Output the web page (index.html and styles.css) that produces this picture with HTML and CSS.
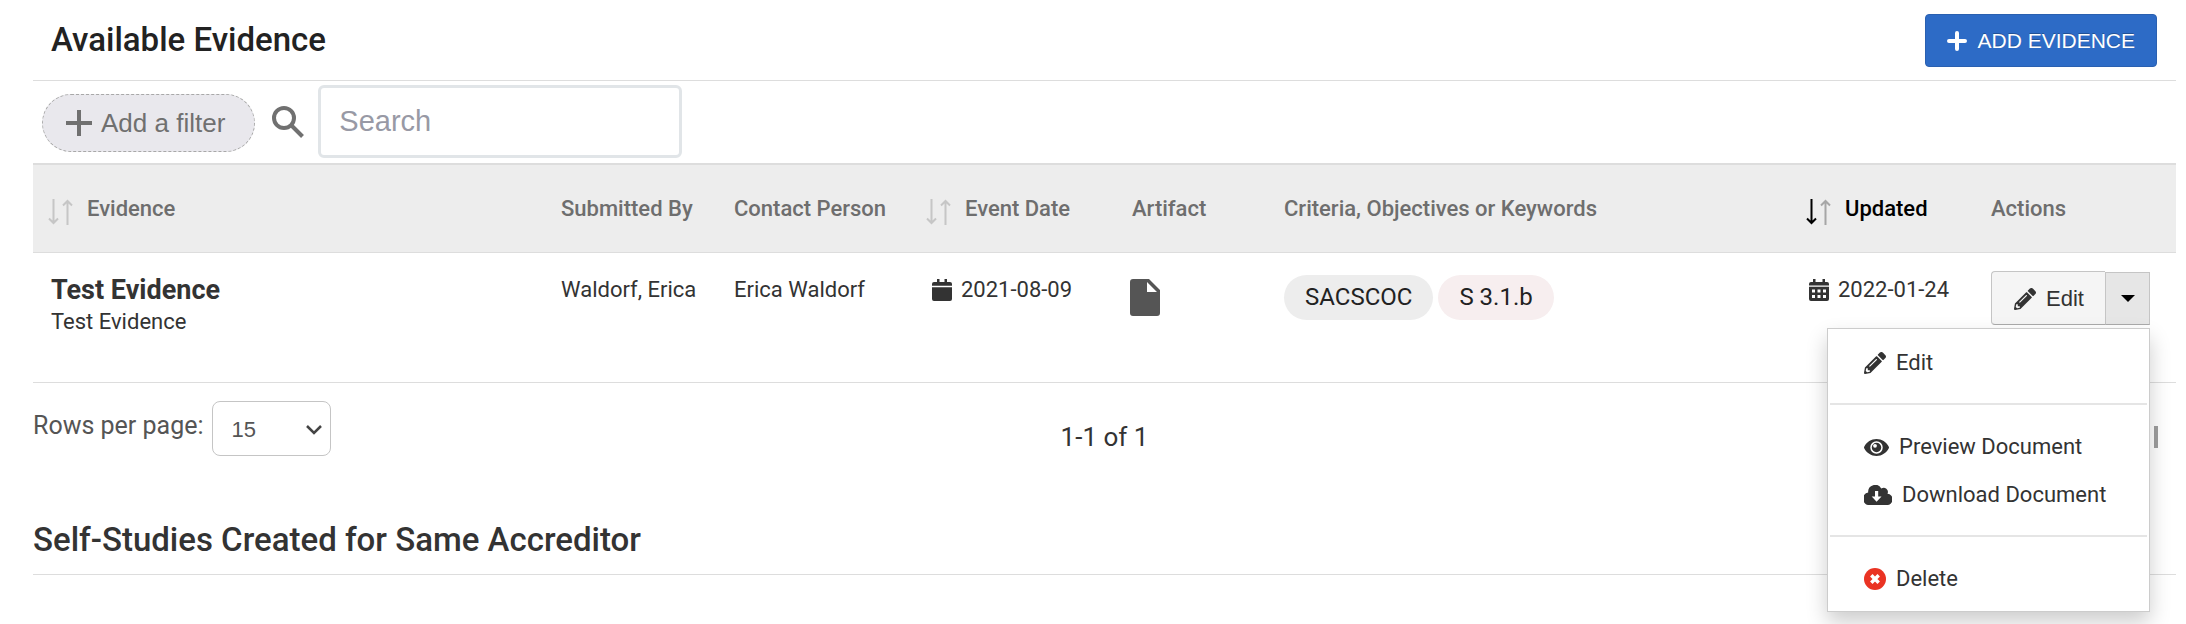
FILE: index.html
```html
<!DOCTYPE html>
<html lang="en">
<head>
<meta charset="utf-8">
<title>Available Evidence</title>
<link rel="stylesheet" href="styles.css">
</head>
<body>
<svg class="sprite" aria-hidden="true">
  <symbol id="pencil" viewBox="0 0 512 512"><path d="M498 142l-46 46c-5 5-12 5-17 0L324 77c-5-5-5-12 0-17l46-46c19-19 49-19 68 0l60 60c19 19 19 49 0 68zm-214-42L22 362 0 484c-3 16 12 30 28 28l122-22 262-262c5-5 5-12 0-17L301 100c-4-5-12-5-17 0zM124 340c-5-5-5-14 0-20l154-154c6-5 15-5 20 0s5 15 0 20L144 340c-6 5-15 5-20 0zm-36 84h48v36l-64 12-32-31 12-65h36v48z"/></symbol>
  <symbol id="sort-down" viewBox="0 0 11 26"><path d="M5.500 0v24M1 19.500l4.500 4.500 4.500-4.500" fill="none" stroke="currentColor" stroke-width="2"/></symbol>
  <symbol id="sort-up" viewBox="0 0 11 26"><path d="M5.500 26V2M1 6.500l4.500-4.500 4.500 4.500" fill="none" stroke="currentColor" stroke-width="2"/></symbol>
</svg>
<main class="page">
  <header class="title-bar">
    <h1>Available Evidence</h1>
    <button class="add-button" type="button">
      <svg width="20" height="20" viewBox="0 0 20 20"><path d="M10 2v16M2 10h16" stroke="currentColor" stroke-width="4" stroke-linecap="round"/></svg>
      ADD EVIDENCE
    </button>
  </header>

  <div class="toolbar">
    <button class="filter-button" type="button">
      <svg width="26" height="26" viewBox="0 0 26 26"><path d="M13 0v26M0 13h26" stroke="currentColor" stroke-width="4"/></svg>
      Add a filter
    </button>
    <label class="search-label" for="search" aria-label="Search">
      <svg width="32" height="32" viewBox="0 0 32 32" fill="none" stroke="currentColor"><circle cx="12" cy="12" r="10" stroke-width="4"/><path d="M20 20l10.500 10.500" stroke-width="4"/></svg>
    </label>
    <input class="search" id="search" type="text" placeholder="Search">
  </div>

  <table class="evidence">
    <colgroup><col class="c-name"><col class="c-by"><col class="c-contact"><col class="c-date"><col class="c-artifact"><col class="c-criteria"><col class="c-updated"><col class="c-actions"></colgroup>
    <thead>
      <tr>
        <th><span class="sortable"><span class="arrows"><svg><use href="#sort-down"/></svg><svg><use href="#sort-up"/></svg></span>Evidence</span></th>
        <th>Submitted By</th>
        <th>Contact Person</th>
        <th><span class="sortable"><span class="arrows"><svg><use href="#sort-down"/></svg><svg><use href="#sort-up"/></svg></span>Event Date</span></th>
        <th>Artifact</th>
        <th>Criteria, Objectives or Keywords</th>
        <th><span class="sortable sorted"><span class="arrows"><svg><use href="#sort-down"/></svg><svg><use href="#sort-up"/></svg></span>Updated</span></th>
        <th>Actions</th>
      </tr>
    </thead>
    <tbody>
      <tr>
        <td><strong class="name">Test Evidence</strong>Test Evidence</td>
        <td>Waldorf, Erica</td>
        <td>Erica Waldorf</td>
        <td><span class="date event-date">
          <svg width="20" height="22" viewBox="0 0 20 22" fill="currentColor"><path d="M5 0h2.500v3h5V0H15v3h3a2 2 0 0 1 2 2v1.800H0V5a2 2 0 0 1 2-2h3zM0 8.300h20V20a2 2 0 0 1-2 2H2a2 2 0 0 1-2-2z"/></svg>
          2021-08-09</span></td>
        <td class="artifact"><svg class="file" width="30" height="37" viewBox="0 0 30 37"><path fill="currentColor" fill-rule="evenodd" d="M3 0h16l11 11v23a3 3 0 0 1-3 3H3a3 3 0 0 1-3-3V3a3 3 0 0 1 3-3zm14 3v10h10z"/></svg></td>
        <td><div class="chips"><span class="chip">SACSCOC</span><span class="chip chip-rose">S 3.1.b</span></div></td>
        <td><span class="date">
          <svg width="20" height="22" viewBox="0 0 20 22" fill="currentColor"><path fill-rule="evenodd" d="M4 0h2.500v3h7V0H16v3h2a2 2 0 0 1 2 2v1.500H0V5a2 2 0 0 1 2-2h2zM0 7.800h20V20a2 2 0 0 1-2 2H2a2 2 0 0 1-2-2zM3 10.500v3h3v-3zm5.500 0v3h3v-3zm5.500 0v3h3v-3zM3 16v3h3v-3zm5.500 0v3h3v-3zm5.500 0v3h3v-3z"/></svg>
          2022-01-24</span></td>
        <td>
          <div class="split">
            <button class="edit-button" type="button"><svg width="22" height="22" fill="currentColor"><use href="#pencil"/></svg>Edit</button>
            <button class="toggle-button" type="button" aria-label="More actions"><svg width="14" height="7" viewBox="0 0 14 7"><path d="M0 0h14L7 7z"/></svg></button>
            <div class="menu">
              <a href="#edit"><svg width="22" height="22" fill="currentColor"><use href="#pencil"/></svg>Edit</a>
              <hr>
              <a href="#preview"><svg width="25" height="17" viewBox="0 0 25 17"><path fill="currentColor" d="M.2 7.700C2.600 3 7.200 0 12.500 0s9.900 3 12.300 7.700q.4.800 0 1.600C22.400 14 17.800 17 12.500 17S2.600 14 .2 9.300q-.4-.8 0-1.600z"/><circle cx="12.500" cy="8.500" r="5.500" fill="none" stroke="#fff" stroke-width="1.500"/><circle cx="11" cy="6.800" r="1.900" fill="#fff"/></svg>Preview Document</a>
              <a href="#download"><svg width="28" height="20" viewBox="0 0 28 20"><path fill="currentColor" d="M23.500 8.700A4.200 4.200 0 0 0 17.300 3.500 7 7 0 0 0 4.200 7.500 6.300 6.300 0 0 0 6.300 20H22.500a5.600 5.600 0 0 0 1-11.300z"/><path fill="#fff" d="M11 6h3.200v5.500h3.300L12.600 16.800 7.700 11.500H11z"/></svg>Download Document</a>
              <hr>
              <a href="#delete"><svg width="22" height="22" viewBox="0 0 22 22"><circle cx="11" cy="11" r="11" fill="#ea3323"/><path d="M7.300 7.300l7.400 7.400M14.700 7.300l-7.400 7.400" stroke="#fff" stroke-width="3.500"/></svg>Delete</a>
            </div>
          </div>
        </td>
      </tr>
    </tbody>
  </table>

  <nav class="pager">
    <div class="page-size">
      <label for="rows">Rows per page:</label>
      <span class="select-wrap">
        <select id="rows"><option>15</option></select>
        <svg class="chevron" width="16" height="10" viewBox="0 0 16 10"><path d="M1 1l7 7 7-7" fill="none" stroke="#444" stroke-width="2.500"/></svg>
      </span>
    </div>
    <span class="range">1-1 of 1</span>
    <button class="last-page" type="button" aria-label="Last page"><svg width="20" height="22" viewBox="0 0 20 22"><path d="M2 3l8 8-8 8" fill="none" stroke="#9e9e9e" stroke-width="3"/><path d="M16 0h4v22h-4z" fill="#9e9e9e"/></svg></button>
  </nav>

  <h2>Self-Studies Created for Same Accreditor</h2>
</main>
</body>
</html>
```
FILE: styles.css
```css
* { box-sizing: border-box; }

body {
  margin: 0;
  background: #fff;
  color: #333;
  font: 22px/32px Roboto, sans-serif;
}

button, input, select { font: inherit; color: inherit; }
svg { flex: none; }
.sprite { display: none; }

.page { min-height: 100vh; padding: 0 10px 0 33px; }

.title-bar {
  display: flex;
  align-items: center;
  justify-content: space-between;
  height: 81px;
  padding: 0 19px 0 18px;
  border-bottom: 1px solid #ddd;
}

h1, h2 { margin: 0; font-size: 33px; font-weight: 500; line-height: 40px; }
h1 { color: #222; }

.add-button {
  display: flex;
  align-items: center;
  gap: 10px;
  height: 53px;
  padding: 2px 21px 0;
  border: 1px solid #2a60b0;
  border-radius: 4px;
  background: #2d6bc6;
  color: #fff;
  font-family: "Liberation Sans", sans-serif;
  font-size: 21px;
  text-shadow: 0 -1px 0 rgba(0, 0, 0, 0.25);
}

.toolbar {
  display: flex;
  align-items: center;
  height: 82px;
  padding-left: 9px;
  color: #707070;
  font-family: "Liberation Sans", sans-serif;
}

.filter-button {
  display: flex;
  align-items: center;
  gap: 9px;
  height: 58px;
  margin-top: 2px;
  padding: 0 29px 0 23px;
  border: 1px dashed #a8a8a8;
  border-radius: 29px;
  background: #e9e8ed;
  font-size: 26px;
}

.search-label { display: flex; margin: 0 14px 0 17px; }

.search {
  width: 364px;
  height: 73px;
  margin-bottom: 2px;
  padding: 0 18px;
  border: 3px solid #e1e5e8;
  border-radius: 6px;
  font-size: 29px;
}
.search::placeholder { color: #9899a5; opacity: 1; }

.evidence {
  width: 100%;
  table-layout: fixed;
  border-collapse: separate;
  border-spacing: 0;
  border-top: 2px solid #ddd;
}
.c-name { width: 510px; }
.c-by { width: 173px; }
.c-contact { width: 195px; }
.c-date { width: 203px; }
.c-artifact { width: 152px; }
.c-updated { width: 182px; }
.c-actions { width: 203px; }

th, td { padding: 0 0 0 18px; border-bottom: 1px solid #ddd; text-align: left; white-space: nowrap; }
th { height: 88px; background: #ededed; color: #6e6e6e; font-weight: 500; }
td { height: 130px; padding-top: 21px; vertical-align: top; }

.sortable { display: flex; align-items: center; gap: 14px; margin-left: -3px; }
.arrows { display: flex; gap: 3px; padding-top: 7px; color: #c6c6c6; }
.arrows svg { width: 11px; height: 26px; }
.sorted { color: #000; }
.sorted .arrows svg:first-child { color: #000; }
.sorted .arrows svg:last-child { color: #a6a6a6; }

.name { display: block; font-size: 27px; font-weight: 700; }
.date { display: flex; align-items: center; gap: 9px; }
.event-date { padding-left: 3px; }
.artifact { padding-left: 16px; }
.file { display: block; margin-top: 5px; color: #555; }

.chips { display: flex; gap: 5px; padding-top: 1px; }
.chip {
  padding: 0 21px;
  border-radius: 23px;
  background: #ededed;
  color: #222;
  font-size: 24px;
  line-height: 45px;
}
.chip-rose { background: #f7eeef; }

.split { position: relative; display: flex; align-items: flex-end; width: 159px; margin-top: -3px; }
.edit-button {
  display: flex;
  flex: 1;
  align-items: center;
  gap: 10px;
  height: 54px;
  padding: 2px 0 0 22px;
  border: 1px solid #c5c5c5;
  border-right: 0;
  border-bottom-color: #aaa;
  border-radius: 4px 0 0 4px;
  background: #f5f5f5;
  font-family: "Liberation Sans", sans-serif;
}
.toggle-button {
  display: grid;
  place-items: center;
  width: 45px;
  height: 53px;
  padding: 0;
  border: 1px solid #c5c5c5;
  border-bottom-color: #aaa;
  background: #e6e6e6;
}

.menu {
  position: absolute;
  z-index: 1;
  top: 57px;
  right: 0;
  width: 323px;
  padding: 9px 2px;
  border: 1px solid #ccc;
  background: #fff;
  box-shadow: 0 10px 20px rgba(0, 0, 0, 0.2);
}
.menu a {
  display: flex;
  align-items: center;
  gap: 10px;
  height: 48px;
  padding: 2px 0 0 34px;
  color: #333;
  text-decoration: none;
}
.menu hr { height: 2px; margin: 17px 0; border: 0; background: #e5e5e5; }

.pager {
  display: grid;
  grid-template-columns: 1fr auto 1fr;
  align-items: center;
  height: 108px;
  font-size: 26px;
}
.page-size { display: flex; align-items: center; align-self: start; gap: 8px; padding-top: 18px; color: #555; }
.page-size label { padding-bottom: 6px; font-size: 25px; }
.select-wrap { position: relative; display: flex; }
.page-size select {
  appearance: none;
  width: 119px;
  height: 55px;
  padding: 2px 19px 0;
  border: 1px solid #c5c5c5;
  border-radius: 8px;
  background: #fff;
  font-family: "Liberation Sans", sans-serif;
  font-size: 22px;
}
.chevron { position: absolute; top: 24px; right: 9px; pointer-events: none; }
.last-page { display: flex; justify-self: end; margin-right: 18px; padding: 0; border: 0; background: none; }

h2 { height: 84px; padding-top: 29px; border-bottom: 1px solid #ddd; }
```
